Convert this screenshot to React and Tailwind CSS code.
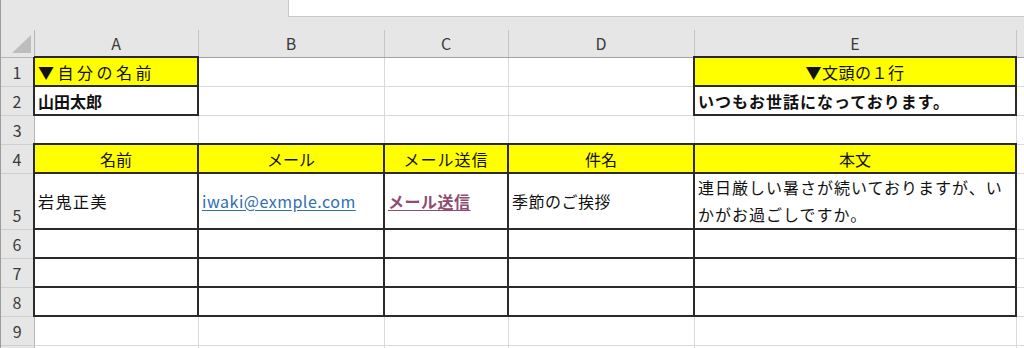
const FONT = "font-['Noto_Sans_CJK_JP','Noto_Sans',sans-serif]"

// Column widths in px (F is the sliver of the next column at the right edge)
const COLS = [
  { key: 'A', width: 164 },
  { key: 'B', width: 186 },
  { key: 'C', width: 124 },
  { key: 'D', width: 186 },
  { key: 'E', width: 322 },
  { key: 'F', width: 8 },
]

const GRID = 'border border-[#d9d9d9]'
const BOX = 'border-2 border-[#2a2a2a]'
const YELLOW = 'bg-[#ffff00]'
const EMPTY_BOX_ROW = [{ cls: BOX }, { cls: BOX }, { cls: BOX }, { cls: BOX }, { cls: BOX }, {}]
const EMPTY_ROW = [{}, {}, {}, {}, {}, {}]

// One entry per sheet row; cells are A..F
const ROWS = [
  {
    n: 1, h: 'h-[29px]',
    cells: [
      { text: '▼自分の名前', cls: `${BOX} ${YELLOW} tracking-[3.5px]` },
      {}, {}, {},
      { text: '▼文頭の１行', cls: `${BOX} ${YELLOW} text-center tracking-[0.5px]` },
      {},
    ],
  },
  {
    n: 2, h: 'h-[29px]',
    cells: [
      { text: '山田太郎', cls: `${BOX} font-bold` },
      {}, {}, {},
      { text: 'いつもお世話になっております。', cls: `${BOX} font-bold tracking-[1px]` },
      {},
    ],
  },
  { n: 3, h: 'h-[28px]', cells: EMPTY_ROW },
  {
    n: 4, h: 'h-[28px]',
    cells: [
      { text: '名前', cls: `${BOX} ${YELLOW} text-center` },
      { text: 'メール', cls: `${BOX} ${YELLOW} text-center` },
      { text: 'メール送信', cls: `${BOX} ${YELLOW} text-center tracking-[1px]` },
      { text: '件名', cls: `${BOX} ${YELLOW} text-center` },
      { text: '本文', cls: `${BOX} ${YELLOW} text-center` },
      {},
    ],
  },
  {
    n: 5, h: 'h-[54px]', numAlign: 'align-bottom',
    cells: [
      { text: '岩鬼正美', cls: `${BOX} tracking-[1.5px]` },
      {
        text: <span className="text-[#2f6eb0] underline underline-offset-2 tracking-[0.5px]">iwaki@exmple.com</span>,
        cls: BOX,
      },
      {
        text: <span className="text-[#8e4c72] font-bold underline underline-offset-2 tracking-[0.5px]">メール送信</span>,
        cls: BOX,
      },
      { text: '季節のご挨拶', cls: `${BOX} tracking-[0.5px]` },
      {
        text: <>連日厳しい暑さが続いておりますが、い<br />かがお過ごしですか。</>,
        cls: `${BOX} align-top leading-[27px] tracking-[1px]`,
      },
      {},
    ],
  },
  { n: 6, h: 'h-[28px]', cells: EMPTY_BOX_ROW },
  { n: 7, h: 'h-[27px]', cells: EMPTY_BOX_ROW },
  { n: 8, h: 'h-[27px]', cells: EMPTY_BOX_ROW },
  { n: 9, h: 'h-[29px]', cells: EMPTY_ROW },
  // only the top edge of row 10 shows, so no number
  { n: '', h: 'h-[29px]', cells: EMPTY_ROW },
]

export default function App() {
  return (
    <div className={`w-[1024px] h-[348px] overflow-hidden bg-white ${FONT} border-l border-[#9c9c9c]`}>
      {/* Strip above the grid, with the formula bar box at the right */}
      <div className="h-[30px] bg-[#e6e6e6] flex">
        <div className="w-[287px]" />
        <div className="flex-1 h-[17px] bg-white border-l border-b border-[#c9c9c9]" />
      </div>

      <table className="table-fixed border-collapse w-[1023px] text-[16px] text-[#111]">
        <colgroup>
          <col className="w-[33px]" />
          {COLS.map(c => <col key={c.key} style={{ width: c.width }} />)}
        </colgroup>
        <thead>
          <tr className="h-[27px]">
            <th className="relative bg-[#e6e6e6] border-r border-b border-[#b5b5b5] p-0">
              {/* Select-all corner triangle */}
              <svg className="absolute right-[3px] bottom-[4px]" width="19" height="18" viewBox="0 0 19 18">
                <polygon points="19,0 19,18 0,18" fill="#bdbdbd" />
              </svg>
            </th>
            {COLS.map(c => (
              <th
                key={c.key}
                className="bg-[#e6e6e6] border-x border-[#c4c4c4] border-b border-b-[#a3a3a3] p-0 font-normal text-[16px] text-[#3a3a3a] text-center align-middle"
              >
                {c.key === 'F' ? '' : c.key}
              </th>
            ))}
          </tr>
        </thead>
        <tbody>
          {ROWS.map((row, r) => (
            <tr key={r} className={row.h}>
              <th
                className={`bg-[#e6e6e6] border-r border-r-[#b5b5b5] border-b border-b-[#cfcfcf] p-0 font-normal text-[16px] text-[#3a3a3a] text-center leading-[28px] ${row.numAlign ?? 'align-middle'}`}
              >
                {row.n}
              </th>
              {row.cells.map((cell, i) => (
                <td
                  key={i}
                  className={`${cell.cls ?? GRID} px-[3px] py-0 whitespace-nowrap overflow-hidden ${cell.cls?.includes('align-top') ? '' : 'align-middle'} leading-[22px]`}
                >
                  {cell.text ?? ''}
                </td>
              ))}
            </tr>
          ))}
        </tbody>
      </table>
    </div>
  )
}
